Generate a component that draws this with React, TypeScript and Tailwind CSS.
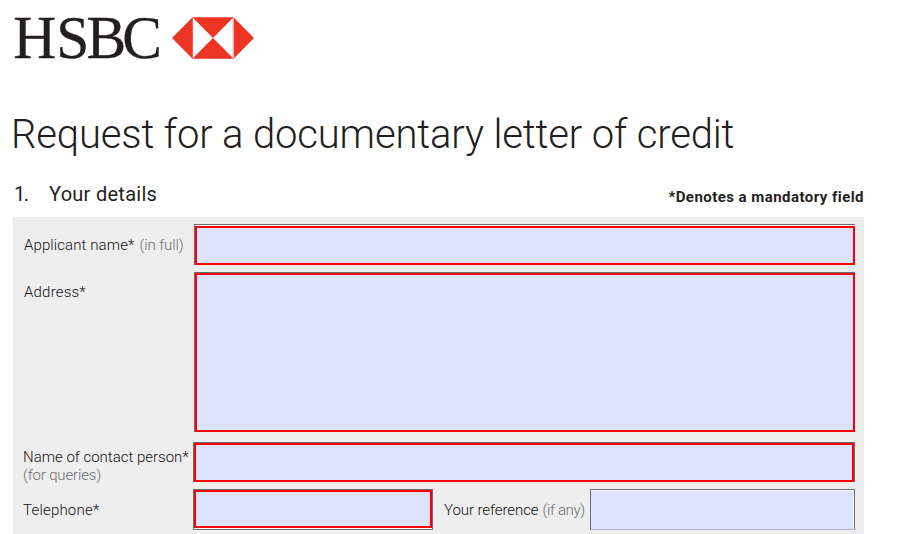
import type { ReactNode } from "react";

function Logo() {
  return (
    <svg width="904" height="76" viewBox="0 0 904 76" className="block">
      <g
        transform="scale(0.96 1)"
        fill="#231f20"
        stroke="#231f20"
        strokeWidth="0.3"
        fontFamily="'Liberation Serif', serif"
        fontSize="62"
      >
        <text y="58.5" x="13.8 58.7 90 127.4">HSBC</text>
      </g>
      <path d="M172 38 192.5 17.3H233.5L254 38 233.5 58.7H192.5Z" fill="#ee3524" />
      <path d="M193.3 18.3 213 38 193.3 57.7ZM232.7 18.3 213 38 232.7 57.7Z" fill="#fff" />
      <path d="M193.3 18V58M233.2 18V58" stroke="#fff" strokeWidth="1" />
    </svg>
  );
}

function Field({ frame, children }: { frame: string; children?: ReactNode }) {
  return (
    <div className={`flex shrink-0 border-[#6d6e71] bg-white ${frame}`}>
      {children ?? <div className="flex-1 border-2 border-[#ff0000] bg-[#dce3ff]" />}
    </div>
  );
}

export default function App() {
  return (
    <main className="flex h-[534px] w-[904px] flex-col overflow-hidden bg-white font-['Roboto','Liberation_Sans',sans-serif] text-[#231f20]">
      <Logo />
      <h1 className="ml-[11px] mt-[35px] h-[48px] whitespace-nowrap text-[40px] font-light leading-[48px] tracking-[-0.15px]">
        Request for a documentary letter of credit
      </h1>
      <div className="ml-[14px] flex h-[58px] w-[850px] items-start justify-between pt-[23px]">
        <h2 className="flex text-[20px] leading-[24px] tracking-[0.27px]">
          <span className="w-[35px] tracking-[-1.5px]">1.</span>
          <span>Your details</span>
        </h2>
        <p className="pt-[5px] text-[15px] font-bold leading-[20px] tracking-[0.45px]">*Denotes a mandatory field</p>
      </div>
      <section className="ml-[13px] flex h-[317px] w-[851px] flex-col bg-[#eeeeee] pl-[10px] pt-[7px] text-[15px] font-light leading-[18px] text-[#151213]">
        <div className="flex">
          <p className="flex w-[171px] gap-[5px] whitespace-nowrap pl-px pt-[12px]">
            <span className="tracking-[0.1px]">Applicant name*</span>
            <span className="tracking-[-0.08px] text-[#6d6e71]">(in full)</span>
          </p>
          <Field frame="h-[41px] w-[661px] border-l border-t pt-px" />
        </div>
        <div className="mt-[7px] flex">
          <p className="w-[171px] pl-px pt-[11px] tracking-[0.2px]">Address*</p>
          <Field frame="h-[160px] w-[661px] border-l border-t" />
        </div>
        <div className="mt-[10px] flex h-[40px]">
          <p className="w-[170px] whitespace-nowrap pt-[6px]">
            <span>Name of contact person*</span>
            <br />
            <span className="tracking-[-0.15px] text-[#6d6e71]">(for queries)</span>
          </p>
          <Field frame="h-[40px] w-[662px] border-l border-r border-t" />
        </div>
        <div className="mt-[7px] flex">
          <p className="w-[170px] pt-[12px] tracking-[0.2px]">Telephone*</p>
          <Field frame="h-[41px] w-[240px] border pb-px" />
          <p className="flex w-[157px] gap-[4px] whitespace-nowrap pl-[11px] pt-[12px]">
            <span className="tracking-[-0.07px]">Your reference</span>
            <span className="tracking-[-0.35px] text-[#6d6e71]">(if any)</span>
          </p>
          <Field frame="h-[41px] w-[265px] border-l border-r border-t pt-px pr-px">
            <div className="flex-1 border-b border-[#a9b3cc] bg-[#dce3ff]" />
          </Field>
        </div>
      </section>
    </main>
  );
}
